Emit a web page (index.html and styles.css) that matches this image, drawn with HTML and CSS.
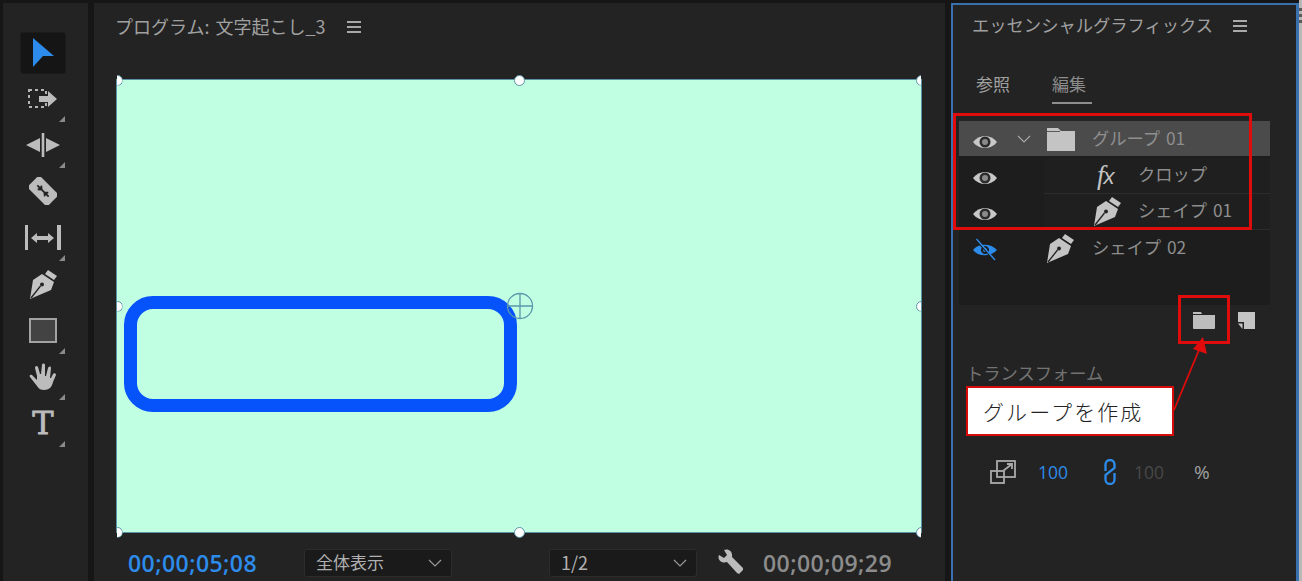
FILE: index.html
```html
<!DOCTYPE html>
<html lang="ja">
<head>
<meta charset="utf-8">
<title>Premiere Pro</title>
<link rel="stylesheet" href="styles.css">
</head>
<body>
<div class="app">
  <aside class="tools">
    <div class="tool selected"><svg width="24" height="32" viewBox="0 0 24 32"><path class="blue" d="M2 1 23 19 12 19 2 30Z"/></svg></div>
    <div class="tool corner"><svg width="30" height="22" viewBox="0 0 30 22"><rect x="1" y="2" width="17" height="17" fill="none" stroke="#b4b4b4" stroke-width="2" stroke-dasharray="3 3"/><path class="ico" d="M11 8h9V3l9 8-9 8v-5h-9Z"/></svg></div>
    <div class="tool corner"><svg width="34" height="26" viewBox="0 0 34 26"><path class="ico" d="M0 13 14 6v14ZM34 13 20 6v14ZM15.700 1h2.600v24h-2.600Z"/></svg></div>
    <div class="tool"><svg width="28" height="28" viewBox="0 0 28 28"><g transform="rotate(45 14 14)"><rect class="ico" x="0" y="5.500" width="28" height="17" rx="1"/><path d="M6 14h16M9 11.500l3 2.500-3 2.500M19 11.500l-3 2.500 3 2.500" fill="none" stroke="#232323" stroke-width="1.800"/></g></svg></div>
    <div class="tool corner"><svg width="36" height="26" viewBox="0 0 36 26"><path class="ico" d="M0 0h3v25H0ZM32 0h4v25h-4ZM6 13l6-5v3h11V8l6 5-6 5v-3H12v3Z"/></svg></div>
    <div class="tool"><svg width="28" height="29" viewBox="0 0 28 29"><use href="#pen"/></svg></div>
    <div class="tool corner"><div class="rect-tool"></div></div>
    <div class="tool corner"><svg width="28" height="28" viewBox="0 0 28 28"><path class="ico" d="M8 17 3 12c-2-1-3 1-2 2l7 9c2 3 4 4 7 4 5 0 8-3 9-8l3-7c0-2-2-2-3-1l-2 4-1 0 1-10c0-2-2-2-3 0l-2 8h-1V2c0-2-3-2-3 0l-1 9h-1L9 4C8 2 6 3 6 5l2 8Z"/></svg></div>
    <div class="tool corner"><span class="t-tool">T</span></div>
  </aside>

  <main class="program">
    <header class="panel-head">
      <span class="panel-title">プログラム: 文字起こし_3</span>
      <span class="burger"><i></i><i></i><i></i></span>
    </header>
    <div class="canvas">
      <div class="shape"></div>
      <i class="handle h-tl"></i><i class="handle h-tc"></i><i class="handle h-tr"></i>
      <i class="handle h-ml"></i><i class="handle h-mr"></i>
      <i class="handle h-bl"></i><i class="handle h-bc"></i><i class="handle h-br"></i>
      <svg class="anchor" width="28" height="28" viewBox="0 0 28 28"><circle cx="14" cy="14" r="12.500" fill="none" stroke="#5a97aa" stroke-width="1.300"/><path d="M14 1v26M1 14h26" stroke="#5a97aa" stroke-width="1.300"/></svg>
    </div>
    <footer class="transport">
      <span class="tc tc-now">00;00;05;08</span>
      <div class="select sel-zoom"><span>全体表示</span><svg width="14" height="8" viewBox="0 0 14 8"><path d="M1 1l6 6 6-6" fill="none" stroke="#9a9a9a" stroke-width="1.200"/></svg></div>
      <div class="select sel-res"><span>1/2</span><svg width="14" height="8" viewBox="0 0 14 8"><path d="M1 1l6 6 6-6" fill="none" stroke="#9a9a9a" stroke-width="1.200"/></svg></div>
      <svg class="wrench" width="26" height="26" viewBox="0 0 26 26"><path class="ico" d="M1 6 6 9 9 6 6 1C10-1 15 2 14 8L25 19 25 21 21 25 19 24 9 13C3 15-1 10 1 6Z"/></svg>
      <span class="tc tc-end">00;00;09;29</span>
    </footer>
  </main>

  <section class="essential">
    <header class="panel-head eg-head">
      <span class="panel-title eg-title">エッセンシャルグラフィックス</span>
      <span class="burger"><i></i><i></i><i></i></span>
    </header>
    <nav class="tabs">
      <span class="tab">参照</span>
      <span class="tab active">編集</span>
    </nav>
    <div class="layers">
      <div class="layer group">
        <svg class="eye" width="24" height="16" viewBox="0 0 24 16"><use href="#eye"/></svg>
        <svg class="chev" width="14" height="8" viewBox="0 0 14 8"><path d="M1 1l6 6 6-6" fill="none" stroke="#a8a8a8" stroke-width="1.100"/></svg>
        <svg class="folder" width="30" height="24" viewBox="0 0 30 24"><path fill="#c4c4c4" d="M1 1h11l3 3h14v20H1Z"/><path d="M1 4.500h13" stroke="#5a5a5a" stroke-width="1"/></svg>
        <span class="name">グループ 01</span>
      </div>
      <div class="layer child">
        <svg class="eye" width="24" height="16" viewBox="0 0 24 16"><use href="#eye"/></svg>
        <div class="child-body"><span class="fx">f<span class="fx-x">x</span></span><span class="name">クロップ</span></div>
      </div>
      <div class="layer child">
        <svg class="eye" width="24" height="16" viewBox="0 0 24 16"><use href="#eye"/></svg>
        <div class="child-body"><svg class="pen" width="28" height="29" viewBox="0 0 28 29"><use href="#pen"/></svg><span class="name">シェイプ 01</span></div>
      </div>
      <div class="layer last">
        <svg class="eye" width="26" height="24" viewBox="0 0 26 24"><path fill="#2d8ceb" fill-rule="evenodd" d="M1 12C6 5 19 5 25 12 19 19 6 19 1 12ZM13 8a4 4 0 1 0 .01 0Z"/><circle cx="13" cy="12" r="2" fill="#2d8ceb"/><path d="M3 1 21 21" stroke="#1d1d1d" stroke-width="1.500"/><path d="M4.500 1 23 22" stroke="#2d8ceb" stroke-width="1.400"/></svg>
        <svg class="pen pen-top" width="28" height="29" viewBox="0 0 28 29"><use href="#pen"/></svg>
        <span class="name">シェイプ 02</span>
      </div>
    </div>
    <div class="layer-actions">
      <svg width="24" height="18" viewBox="0 0 24 18"><path fill="#bdbdbd" d="M1 1h8l1 2H1ZM1 4h22v13a1 1 0 0 1-1 1H2a1 1 0 0 1-1-1Z"/></svg>
      <svg width="18" height="18" viewBox="0 0 18 18"><path fill="#c4c4c4" d="M1 1h17v17H7v-7H1ZM1 12.500h4.500V18Z"/></svg>
    </div>
    <h2 class="section-title">トランスフォーム</h2>
    <div class="scale-row">
      <svg class="scale-icon" width="26" height="24" viewBox="0 0 26 24"><g fill="none" stroke="#aaa" stroke-width="1.800"><rect x="7" y="1" width="18" height="16"/><rect x="1" y="11" width="13" height="12"/><path d="M13 11l9-7M17 4h5v5"/></g></svg>
      <span class="num num-on">100</span>
      <svg class="link" width="14" height="26" viewBox="0 0 14 26"><g fill="none" stroke="#2d8ceb" stroke-width="2.300"><path d="M2.500 12V5.500a4.500 4.500 0 0 1 9 0V9L2.500 16v4.500a4.500 4.500 0 0 0 9 0V14"/></g></svg>
      <span class="num num-off">100</span>
      <span class="pct">%</span>
    </div>
  </section>
  <div class="edge"><i></i><i></i><i></i></div>
</div>

<div class="note-box note-layers"></div>
<div class="note-box note-folder"></div>
<div class="callout">グループを作成</div>
<svg class="arrow" width="40" height="80" viewBox="0 0 40 80"><path d="M2 74 27 14" stroke="#e00b0b" stroke-width="1.800"/><path d="M31 1 35 18 21 13Z" fill="#e00b0b"/></svg>

<svg class="defs" width="0" height="0">
  <defs>
    <g id="eye"><path fill="#c8c8c8" d="M0 8C6 0 18 0 24 8 18 16 6 16 0 8Z"/><circle cx="12" cy="8" r="5.500" fill="#2b2b2b"/><circle cx="12" cy="8" r="3" fill="#8a8a8a"/></g>
    <g id="pen"><path fill="#c4c4c4" d="M19 0 28 6 25 10 16 4ZM13 4 25 12 22 20 1 29 4 10Z"/><path d="M2 28 11.500 16" stroke="#232323" stroke-width="1.300"/><circle cx="13" cy="14.500" r="2" fill="#232323"/></g>
  </defs>
</svg>
</body>
</html>
```
FILE: styles.css
```css
* { box-sizing: border-box; }
html, body { margin: 0; padding: 0; }
body {
  width: 1302px;
  height: 581px;
  overflow: hidden;
  position: relative;
  background: #161616;
  font-family: "Noto Sans CJK JP", "Noto Sans", sans-serif;
  color: #a8a8a8;
}
.app { display: flex; height: 581px; padding: 3px 0 0 3px; gap: 6px; }
.ico { fill: #bcbcbc; }
.blue { fill: #2d8ceb; }
.defs { position: absolute; }

/* tool rail */
.tools {
  width: 85px;
  background: #232323;
  padding-top: 26px;
  display: flex;
  flex-direction: column;
  flex: none;
}
.tool {
  height: 46.400px;
  margin-left: 17px;
  width: 46px;
  display: flex;
  align-items: center;
  justify-content: center;
  position: relative;
  flex: none;
}
.tool.selected {
  height: 42px;
  margin-top: 3px;
  margin-bottom: 1.400px;
  background: #151515;
  border-radius: 3px;
  border: 1px solid #1b1b1b;
}
.tool.corner::after {
  content: "";
  position: absolute;
  right: 1px;
  bottom: 0;
  border-style: solid;
  border-width: 0 0 6px 6px;
  border-color: transparent transparent #8a8a8a transparent;
}
.rect-tool { width: 28px; height: 25px; background: #434343; border: 2px solid #a2a2a2; }
.t-tool { font: 400 32px/1 "DejaVu Serif", serif; color: #bcbcbc; -webkit-text-stroke: .8px #bcbcbc; }

/* program monitor */
.program {
  width: 851px;
  flex: none;
  background: #232323;
  display: flex;
  flex-direction: column;
  padding: 0 0 0 23px;
}
.panel-head { display: flex; align-items: center; height: 46px; }
.panel-title { font-size: 18px; word-spacing: 2px; line-height: 24px; color: #a0a0a0; white-space: nowrap; margin-left: -2px; }
.burger { display: flex; flex-direction: column; gap: 3px; margin-left: 21px; margin-top: 2px; }
.burger i { display: block; width: 14px; height: 2px; background: #a8a8a8; }
.canvas {
  position: relative;
  margin-top: 31px;
  width: 804px;
  height: 452px;
  background: #c1ffe3;
  box-shadow: 0 0 0 1px #5c93a4;
}
.shape {
  position: absolute;
  left: 7px;
  top: 216px;
  width: 393px;
  height: 116px;
  border: 13.500px solid #0653fb;
  border-radius: 29px;
}
.handle {
  position: absolute;
  width: 11px;
  height: 11px;
  margin: -5.500px 0 0 -5.500px;
  border-radius: 50%;
  background: #fff;
  border: 1px solid #5c93a4;
}
.h-tl { left: 0; top: 0; } .h-tc { left: 402px; top: 0; } .h-tr { left: 804px; top: 0; }
.h-ml { left: 0; top: 226px; } .h-mr { left: 804px; top: 226px; }
.h-bl { left: 0; top: 452px; } .h-bc { left: 402px; top: 452px; } .h-br { left: 804px; top: 452px; }
.h-tl, .h-ml, .h-bl { clip-path: inset(0 0 0 50%); }
.h-tr, .h-mr, .h-br { clip-path: inset(0 50% 0 0); }
.anchor { position: absolute; left: 389px; top: 212px; }
.transport { display: flex; align-items: center; margin-top: 17px; height: 28px; padding-left: 11px; }
.tc { font: 600 23px/28px "Open Sans", sans-serif; letter-spacing: .45px; white-space: nowrap; }
.tc-now { color: #2d8ceb; width: 176px; }
.tc-end { color: #8c8c8c; margin-left: 19px; }
.select {
  display: flex;
  align-items: center;
  justify-content: space-between;
  height: 28px;
  width: 148px;
  background: #1a1a1a;
  border: 1px solid #2c2c2c;
  border-radius: 3px;
  padding: 0 9px 0 11px;
  font-size: 17px;
  color: #b0b0b0;
}
.select span { margin-top: -3px; }
.sel-res span { font-size: 18px; }
.sel-res { margin-left: 97px; }
.wrench { margin-left: 21px; margin-top: -3px; }

/* essential graphics */
.essential {
  width: 348px;
  flex: none;
  background: #232323;
  border: solid #3a71ad;
  border-width: 2px 3px 0 2px;
  padding-left: 6px;
}
.edge {
  flex: 1;
  margin: -3px 0 0 -6px;
  background: #b8b8b8;
  padding-top: 8px;
  display: flex;
  flex-direction: column;
  gap: 3px;
}
.edge i { display: block; height: 3px; background: #5a5a5a; }
.eg-head { height: 42px; padding-left: 16px; margin-top: -1px; }
.eg-title { font-size: 17.300px; word-spacing: 0; margin-left: -3px; }
.eg-head .burger { margin-left: 20px; }
.tabs { display: flex; gap: 42px; padding: 23px 0 0 17px; height: 73px; margin-top: 2px; }
.tab { font-size: 17px; line-height: 26px; color: #a0a0a0; height: 33px; }
.tab.active { width: 40px; border-bottom: 2.500px solid #8e8e8e; color: #8c8c8c; }
.layers { width: 311px; height: 184px; background: #1d1d1d; }
.layer { display: flex; align-items: center; position: relative; }
.layer .eye { margin-left: 14px; margin-top: 3px; flex: none; }
.name { font-size: 17.300px; word-spacing: 2px; color: #8e8e8e; white-space: nowrap; margin-top: -4px; }
.group { height: 35px; background: #4b4b4b; margin-bottom: 2px; }
.group .eye { margin-top: 6px; }
.group .name { color: #8f8f8f; margin-left: 16px; margin-top: -2px; }
.chev { margin-left: 20px; }
.folder { margin-left: 15px; }
.child { height: 36px; }
.child-body {
  display: flex;
  align-items: center;
  margin-left: 47px;
  flex: 1;
  height: 100%;
  border-bottom: 1px solid #2c2c2c;
  background: #1f1f1f;
  padding-left: 53px;
}
.child-body .name { position: absolute; left: 179px; }
.fx { font: italic 400 27px/1 "Liberation Serif", serif; color: #c4c4c4; }
.fx-x { font: italic 400 22px/1 "Liberation Sans", sans-serif; margin-left: -1px; }
.pen { margin-left: -4px; }
.last { height: 36px; }
.last .eye { margin-left: 13px; margin-top: 4px; }
.pen-top { margin-left: 48px; }
.last .name { margin-left: 18px; }
.layer-actions { display: flex; gap: 21px; width: 296px; justify-content: flex-end; padding: 6px 0 0 0; height: 44px; align-items: flex-start; }
.section-title { margin: 11px 0 0 7px; font-size: 17.300px; line-height: 26px; font-weight: 400; color: #737373; white-space: nowrap; }
.scale-row { display: flex; align-items: center; margin: 73px 0 0 31px; height: 26px; }
.num { font: 400 17.500px/26px "Open Sans", sans-serif; }
.num-on { color: #2d8ceb; margin-left: 22px; }
.num-off { color: #484848; margin-left: 17px; }
.link { margin-left: 35px; }
.pct { margin-left: 30px; font: 400 19px/26px "Open Sans", sans-serif; color: #a0a0a0; }

/* red annotations */
.note-box { position: absolute; border: 3px solid #e00b0b; pointer-events: none; }
.note-layers { left: 953px; top: 113px; width: 299px; height: 117px; }
.note-folder { left: 1178px; top: 295px; width: 52px; height: 49px; }
.callout {
  position: absolute;
  left: 966px;
  top: 386px;
  width: 208px;
  height: 50px;
  background: #fff;
  border: 2.500px solid #d80b0b;
  padding-left: 15px;
  font-size: 21px;
  line-height: 47px;
  font-weight: 300;
  letter-spacing: 2.100px;
  color: #222;
  white-space: nowrap;
}
.arrow { position: absolute; left: 1172px; top: 336px; }
```
